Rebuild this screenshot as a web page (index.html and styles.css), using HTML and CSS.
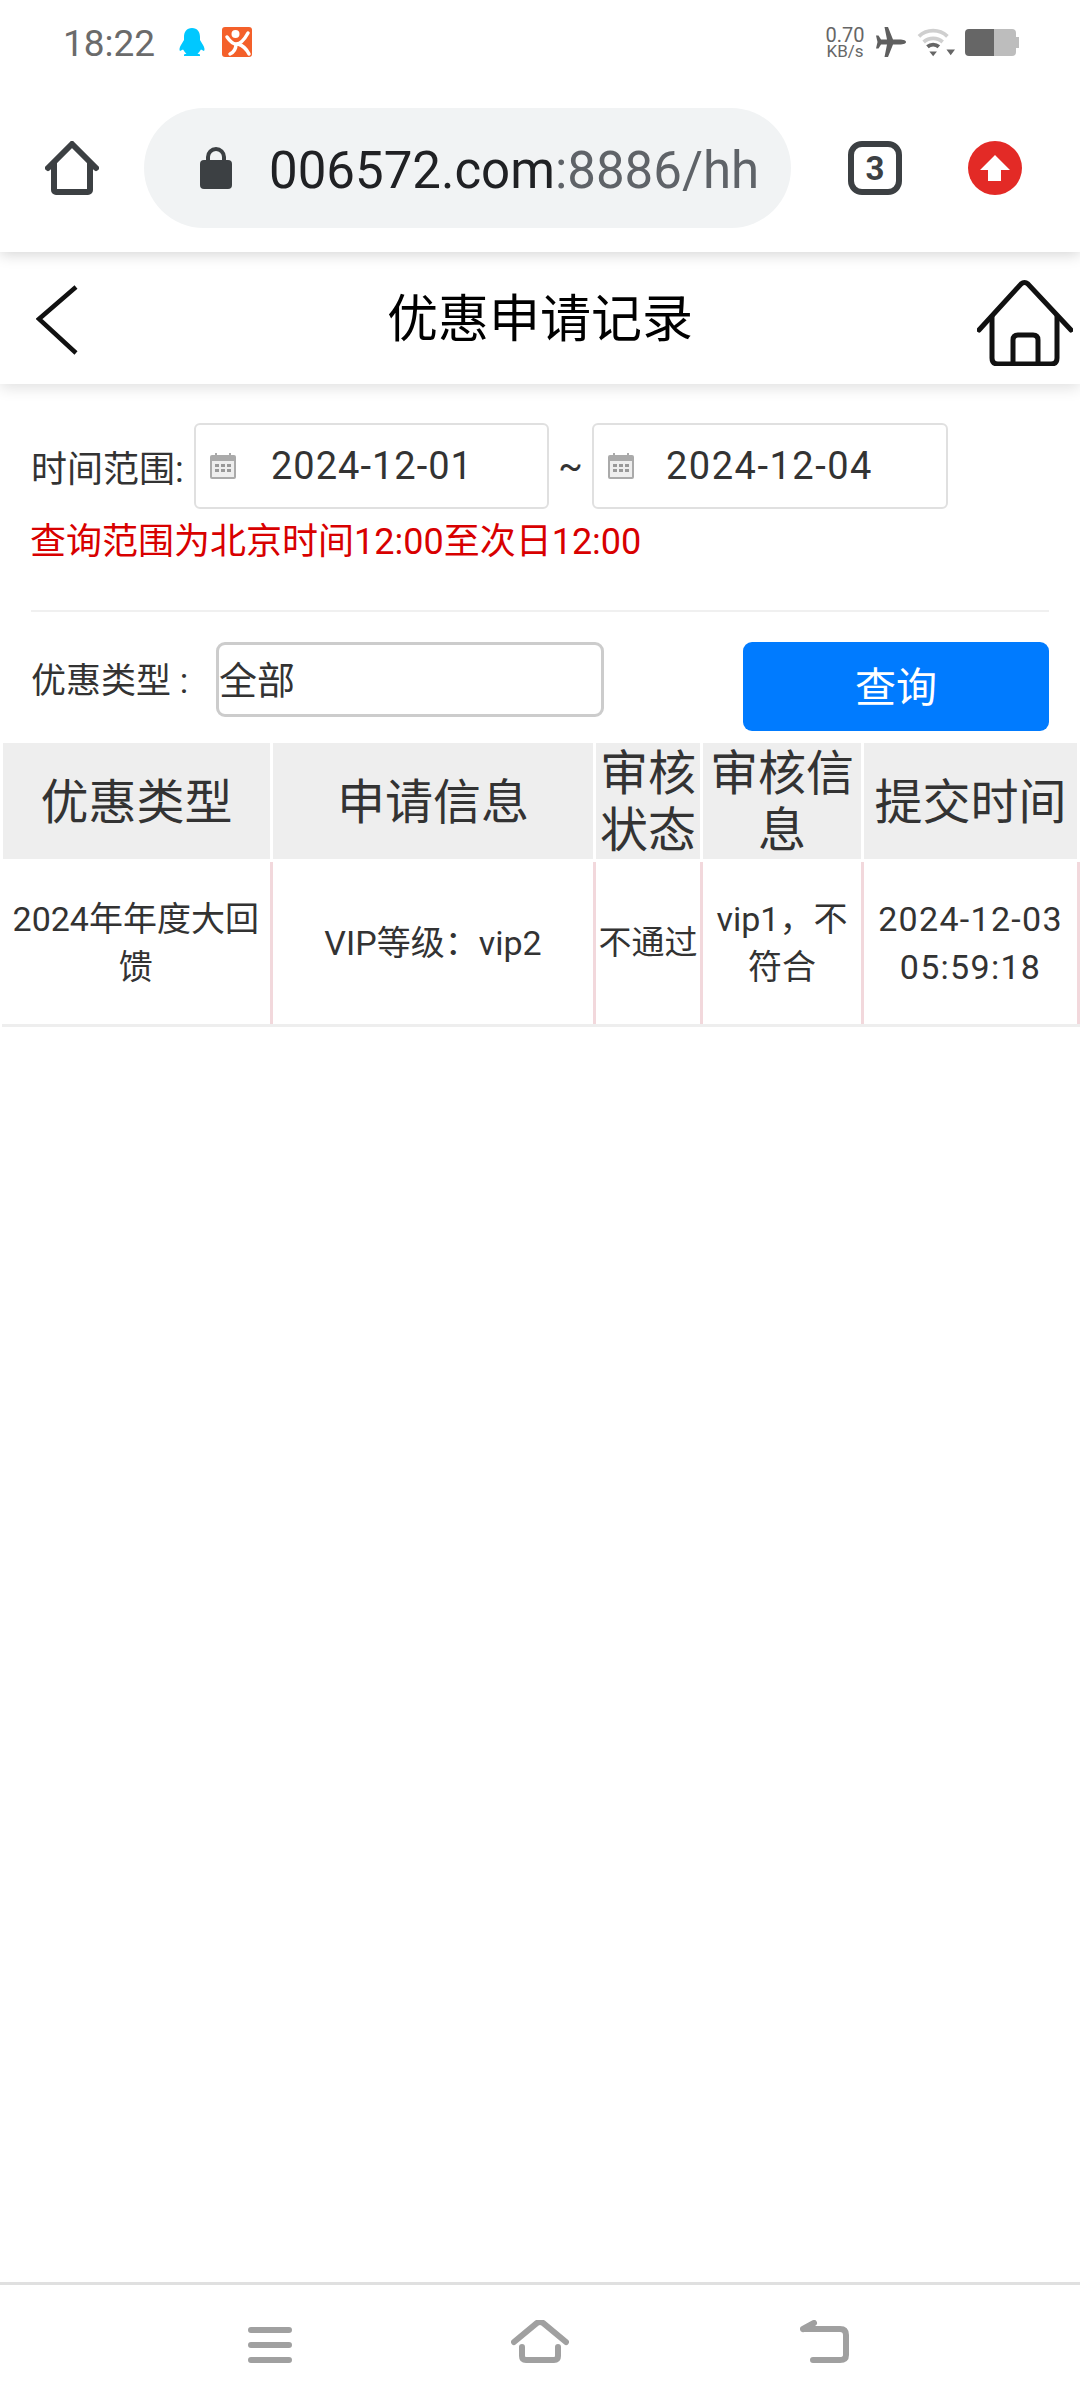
FILE: index.html
```html
<!DOCTYPE html>
<html lang="zh-CN">
<head>
  <meta charset="UTF-8">
  <title>优惠申请记录</title>
  <link rel="stylesheet" href="styles.css">
</head>
<body>
  <div class="status-bar">
    <div class="status-left">
      <span class="clock">18:22</span>
      <svg class="qq" viewBox="0 0 26 28"><path d="M13 0c-5.500 0-8 4-8 9v3l-3 5c-1.500 2.500-2 5-1 6l3-1.500C5 23 6 24.500 7.500 25.500L5 26.500V28h16v-1.500l-2.500-1C20 24.500 21 23 22 21.500l3 1.500c1-1 .5-3.500-1-6l-3-5V9c0-5-2.500-9-8-9z"/></svg>
      <svg class="orange" viewBox="0 0 30 30">
        <rect width="30" height="30" rx="3" fill="#f4602a"/>
        <circle cx="13.500" cy="7" r="4" fill="#fff"/>
        <path d="M5 10q5 7 9 7 6 0 12-11M14 17q0 7-6 10M16 17q7 2 11 10" fill="none" stroke="#fff" stroke-width="3.500" stroke-linecap="round"/>
      </svg>
    </div>
    <div class="status-right">
      <div class="speed"><span class="speed-num">0.70</span><span class="speed-unit">KB/s</span></div>
      <svg class="plane" viewBox="0 0 30 30"><path d="M30 15c0-2-4-2.500-8-2.500h-5L12 0H8.500L11 12.500H5L2.500 8.500H0L1.500 15 0 21.500h2.500L5 17.500h6L8.500 30H12l5-12.500h5c4 0 8-.5 8-2.500z"/></svg>
      <svg class="wifi" viewBox="0 0 40 30">
        <path d="M2 9a22 22 0 0 1 30 0M7 15a15 15 0 0 1 20 0" fill="none" stroke="#cfcfcf" stroke-width="4"/>
        <path d="M11 20a9 9 0 0 1 12 0" fill="none" stroke="#666" stroke-width="4"/>
        <path d="M13 25h8l-4 5zM31 23h9l-4.500 6z" fill="#666"/>
      </svg>
      <svg class="battery" viewBox="0 0 54 27">
        <path d="M4 0h25v27H4a4 4 0 0 1-4-4V4a4 4 0 0 1 4-4z" fill="#666"/>
        <path d="M29 0h18a4 4 0 0 1 4 4v4h3v11h-3v4a4 4 0 0 1-4 4H29z" fill="#bdbdbd"/>
      </svg>
    </div>
  </div>

  <div class="browser-bar">
    <svg class="browser-home" viewBox="0 0 54 54"><path d="M3 27 27 3l24 24M9 22v27a2 2 0 0 0 2 2h32a2 2 0 0 0 2-2V22" fill="none" stroke="#3c4043" stroke-width="6" stroke-linecap="round" stroke-linejoin="round"/></svg>
    <div class="url-pill">
      <svg class="lock" viewBox="0 0 32 44">
        <path d="M8 16V11a8 8 0 0 1 16 0v5" fill="none" stroke="#3c4043" stroke-width="4"/>
        <rect y="14" width="32" height="29" rx="4" fill="#3c4043"/>
      </svg>
      <div class="url-text"><span class="url-host">006572.com</span>:8886/hhe</div>
    </div>
    <div class="tab-count">3</div>
    <svg class="update" viewBox="0 0 54 54">
      <circle cx="27" cy="27" r="27" fill="#e32a26"/>
      <path d="M27 14 42 29H33V40H20V29H12z" fill="#fff"/>
    </svg>
  </div>

  <header class="page-head">
    <svg class="back" viewBox="0 0 42 70"><path d="M40 2 3 34l37 34" fill="none" stroke="#111" stroke-width="4.500"/></svg>
    <h1 class="page-title">优惠申请记录</h1>
    <svg class="head-home" viewBox="0 0 96 87">
      <path d="M2 51 44 5q3.500-3 7 0l43 46" fill="none" stroke="#111" stroke-width="5" stroke-linecap="round"/>
      <path d="M15 36v43q0 6 6 6h53q6 0 6-6V36M36 85V61q0-5 5-5h15q5 0 5 5v24" fill="none" stroke="#111" stroke-width="5"/>
    </svg>
  </header>

  <main class="content">
    <div class="date-row">
      <label class="date-label">时间范围:</label>
      <div class="date-input date-start">
        <svg class="cal" viewBox="0 0 26 26">
          <rect y="2" width="26" height="24" rx="2" fill="#aaa"/>
          <rect x="2" y="8" width="22" height="16" fill="#eee"/>
          <path d="M5 11h4v3H5zM11 11h4v3h-4zM17 11h4v3h-4zM5 16h4v3H5zM11 16h4v3h-4zM17 16h4v3h-4z" fill="#999"/>
          <path d="M5 0h2v3H5zM19 0h2v3h-2z" fill="#aaa"/>
        </svg>
        <span>2024-12-01</span>
      </div>
      <span class="tilde">~</span>
      <div class="date-input date-end">
        <svg class="cal" viewBox="0 0 26 26">
          <rect y="2" width="26" height="24" rx="2" fill="#aaa"/>
          <rect x="2" y="8" width="22" height="16" fill="#eee"/>
          <path d="M5 11h4v3H5zM11 11h4v3h-4zM17 11h4v3h-4zM5 16h4v3H5zM11 16h4v3h-4zM17 16h4v3h-4z" fill="#999"/>
          <path d="M5 0h2v3H5zM19 0h2v3h-2z" fill="#aaa"/>
        </svg>
        <span>2024-12-04</span>
      </div>
    </div>
    <p class="note">查询范围为北京时间12:00至次日12:00</p>
    <hr class="divider">

    <div class="query-row">
      <label class="type-label">优惠类型 :</label>
      <select class="type-select"><option>全部</option></select>
      <button class="query-btn">查询</button>
    </div>

    <table class="record-table">
      <colgroup>
        <col class="col-type"><col class="col-info"><col class="col-status"><col class="col-review"><col class="col-time">
      </colgroup>
      <thead>
        <tr>
          <th>优惠类型</th>
          <th>申请信息</th>
          <th>审核状态</th>
          <th>审核信息</th>
          <th>提交时间</th>
        </tr>
      </thead>
      <tbody>
        <tr>
          <td>2024年年度大回馈</td>
          <td>VIP等级：vip2</td>
          <td class="cell-status">不通过</td>
          <td>vip1，不符合</td>
          <td class="cell-time">2024-12-03 05:59:18</td>
        </tr>
      </tbody>
    </table>
  </main>

  <nav class="nav-bar">
    <svg class="nav-menu" viewBox="0 0 44 36"><path d="M3 0h38a3 3 0 0 1 0 6H3a3 3 0 0 1 0-6zM3 15h38a3 3 0 0 1 0 6H3a3 3 0 0 1 0-6zM3 30h38a3 3 0 0 1 0 6H3a3 3 0 0 1 0-6z" fill="#a0a0a0"/></svg>
    <svg class="nav-home" viewBox="0 0 58 43"><path d="M3 22 26 3q3-2 6 0l23 19M11 27v9q0 4 4 4h28q4 0 4-4v-9" fill="none" stroke="#a0a0a0" stroke-width="6" stroke-linecap="round"/></svg>
    <svg class="nav-back" viewBox="0 0 49 43"><path d="M3 9h37q6 0 6 6v20q0 5-6 5H13M3 9l11-6" fill="none" stroke="#a0a0a0" stroke-width="6" stroke-linecap="round"/></svg>
  </nav>
</body>
</html>
```

FILE: styles.css
```css
html, body { margin: 0; padding: 0; }
body {
  width: 1080px;
  height: 2408px;
  display: flex;
  flex-direction: column;
  overflow: hidden;
  background: #fff;
  font-family: Roboto, "Noto Sans CJK SC", sans-serif;
  color: #333;
}

/* status bar */
.status-bar { height: 84px; box-sizing: border-box; padding: 27px 61px 0 63px; display: flex; justify-content: space-between; align-items: flex-start; position: relative; z-index: 3; background: #fff; }
.status-left, .status-right { display: flex; align-items: center; height: 30px; }
.clock { font-size: 37px; line-height: 30px; color: #6b6b6b; width: 116px; padding-top: 3px; }
.qq { width: 26px; height: 28px; fill: #00c8ff; }
.orange { width: 30px; height: 30px; margin-left: 17px; }
.speed { display: flex; flex-direction: column; align-items: center; width: 38px; color: #666; line-height: 1; }
.speed-num { font-size: 20px; line-height: 17px; }
.speed-unit { font-size: 17px; line-height: 14px; }
.plane { width: 30px; height: 30px; fill: #5f5f5f; margin-left: 12px; }
.wifi { width: 38px; height: 30px; margin-left: 11px; }
.battery { width: 54px; height: 27px; margin-left: 10px; }

/* browser toolbar */
.browser-bar { height: 168px; box-sizing: border-box; padding: 24px 0 0 45px; display: flex; align-items: flex-start; position: relative; z-index: 2; background: #fff; box-shadow: 0 2px 14px rgba(0,0,0,.18); }
.browser-home { width: 54px; height: 54px; margin: 33px 45px 0 0; }
.url-pill { width: 647px; height: 120px; border-radius: 60px; background: #f1f3f4; display: flex; align-items: center; padding-left: 56px; box-sizing: border-box; }
.lock { width: 32px; height: 44px; margin-right: 37px; flex: none; }
.url-text { width: 492px; overflow: hidden; white-space: nowrap; font-size: 51px; color: #5f6368; padding-top: 5px; }
.url-host { color: #202124; }
.tab-count { width: 54px; height: 54px; margin: 33px 66px 0 57px; box-sizing: border-box; border: 6px solid #3c4043; border-radius: 14px; font-size: 33px; font-weight: 700; color: #3c4043; display: flex; align-items: center; justify-content: center; }
.update { width: 54px; height: 54px; margin-top: 33px; }

/* page header */
.page-head { height: 132px; display: grid; grid-template-columns: 1fr auto 1fr; align-items: center; padding-left: 36px; box-shadow: 0 4px 14px rgba(0,0,0,.12); position: relative; z-index: 1; background: #fff; }
.back { width: 42px; height: 70px; margin-top: 3px; filter: blur(.5px); }
.page-title { margin: 0 0 6px -36px; font-size: 51px; font-weight: 400; color: #000; }
.head-home { width: 96px; height: 87px; justify-self: end; margin: 8px 7px 0 0; filter: blur(.5px); }

/* filters */
.content { flex: 1; }
.date-row { display: flex; align-items: center; padding: 39px 0 0 31px; font-size: 36px; }
.date-label { width: 163px; }
.date-input { height: 86px; box-sizing: border-box; border: 2px solid #e0e0e0; border-radius: 6px; display: flex; align-items: center; padding-left: 14px; font-size: 38px; letter-spacing: 1px; color: #333; }
.date-start { width: 355px; }
.date-end { width: 356px; letter-spacing: 1.5px; }
.cal { width: 26px; height: 26px; margin-right: 35px; flex: none; }
.date-end .cal { margin-right: 32px; }
.tilde { width: 43px; text-align: center; }
.note { margin: 1px 0 0 30px; font-size: 36px; line-height: 64px; color: #d80000; }
.divider { margin: 36px 31px 0; height: 2px; border: 0; background: #f0f0f0; }
.query-row { display: flex; align-items: flex-start; margin-top: 30px; padding: 0 31px 0 31px; }
.type-label { width: 185px; font-size: 35px; line-height: 79px; }
.type-select { width: 388px; height: 75px; box-sizing: border-box; appearance: none; -webkit-appearance: none; background: #fff; border: 3px solid #ccc; border-radius: 9px; padding: 2px 0 0; font-family: inherit; font-size: 38px; color: #333; }
.query-btn { width: 306px; height: 89px; margin-left: auto; border: 0; border-radius: 9px; background: #007bff; color: #fff; font-family: inherit; font-size: 41px; padding: 0 0 6px; }

/* records */
.record-table { width: 1077px; margin-top: 9px; border-collapse: collapse; table-layout: fixed; }
.col-type { width: 270px; }
.col-info { width: 323px; }
.col-status { width: 107px; }
.col-review { width: 161px; }
.col-time { width: 216px; }
.record-table th { border: 3px solid #fff; background: #eee; height: 112px; padding: 2px 0 0; font-size: 48px; line-height: 57px; font-weight: 400; }
.record-table td { height: 162px; padding: 0 3px; border-right: 3px solid #f2d8dc; border-bottom: 3px solid #eee; font-size: 34px; line-height: 48px; text-align: center; }
.record-table td.cell-status { padding: 0; font-size: 33px; white-space: nowrap; }
.record-table td.cell-time { letter-spacing: 1.300px; }

/* system nav */
.nav-bar { height: 126px; box-sizing: border-box; border-top: 3px solid #e0e0e0; padding: 35px 0 0 248px; display: flex; align-items: flex-start; }
.nav-menu { width: 44px; height: 36px; margin: 7px 219px 0 0; }
.nav-home { width: 58px; height: 43px; margin-right: 231px; }
.nav-back { width: 49px; height: 43px; }
```
